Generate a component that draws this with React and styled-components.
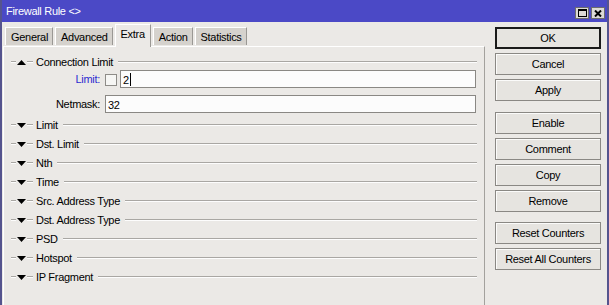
import React from "react";
import styled, { createGlobalStyle } from "styled-components";

const Global = createGlobalStyle`
  html, body { margin: 0; padding: 0; overflow: hidden; background: #ebe9e6; }
  * { box-sizing: border-box; }
  body { font-family: "Liberation Sans", Arial, sans-serif; font-size: 11px; letter-spacing: -0.3px; color: #000; }
`;

const Window = styled.div`
  width: 609px;
  height: 305px;
  display: flex;
  flex-direction: column;
  border-left: 2px solid #55548e;
  border-right: 2px solid #55548e;
  background: #ebe9e6;
  overflow: hidden;
`;

const TitleBar = styled.div`
  height: 22px;
  flex: none;
  background: #4b49c6;
  display: flex;
  align-items: flex-start;
  padding: 4px 2px 0 4px;
`;

const Title = styled.div`
  color: #fff;
  font-size: 11px;
  line-height: 14px;
  flex: 1;
`;

const TitleButtons = styled.div`
  display: flex;
  gap: 2px;
  margin-top: 3px;
`;

const TitleButton = styled.div`
  width: 14px;
  height: 12px;
  background: #dcdad6;
  border: 1px solid #6d6c70;
  display: flex;
  align-items: center;
  justify-content: center;
`;

const Body = styled.div`
  flex: 1;
  display: flex;
  min-height: 0;
`;

const LeftColumn = styled.div`
  width: 484px;
  display: flex;
  flex-direction: column;
`;

const TabStrip = styled.div`
  height: 24px;
  flex: none;
  display: flex;
  align-items: flex-end;
  padding-left: 3px;
  position: relative;
  z-index: 1;
`;

const Tab = styled.div`
  height: ${(p) => (p.$active ? "23px" : "18px")};
  margin-bottom: ${(p) => (p.$active ? "-1px" : "1px")};
  padding: ${(p) => (p.$active ? "2px 5px 0 5px" : "2px 4px 0 5px")};
  margin-right: 2px;
  background: ${(p) => (p.$active ? "#ebe9e6" : "#d5d2cd")};
  border-top: 1px solid #fff;
  border-left: 1px solid #fff;
  border-right: 1px solid #9a9894;
  line-height: 14px;
  white-space: nowrap;
`;

const Pane = styled.div`
  flex: 1;
  margin: 0 1px 0 1px;
  border-top: 1px solid #fff;
  border-left: 1px solid #fff;
  border-right: 1px solid #a3a19d;
  padding: 8px 7px 0 7px;
  display: flex;
  flex-direction: column;
`;

const GroupHeader = styled.div`
  height: 14px;
  margin-top: ${(p) => (p.$first ? "0" : "5px")};
  display: flex;
  align-items: center;
`;

const Seg = styled.div`
  width: ${(p) => p.$w}px;
  flex: ${(p) => (p.$grow ? "1" : "none")};
  height: 2px;
  border-top: 1px solid #a9a7a3;
  border-bottom: 1px solid #fdfdfd;
`;

const Tri = styled.svg`
  flex: none;
  margin: 0 1px;
`;

const GroupTitle = styled.span`
  line-height: 14px;
  margin: 0 5px 0 3px;
  white-space: nowrap;
`;

const FormRow = styled.div`
  height: 18px;
  margin-top: ${(p) => p.$mt}px;
  display: flex;
  align-items: center;
  padding-right: 1px;
`;

const Label = styled.div`
  width: 89px;
  margin-right: 5px;
  text-align: right;
  color: ${(p) => (p.$blue ? "#2b2bd0" : "#000")};
  line-height: 14px;
`;

const Check = styled.div`
  width: 12px;
  height: 12px;
  margin: 1px 3px 0 0;
  background: #f6f6f4;
  border: 1px solid #8e8c88;
`;

const Input = styled.div`
  flex: 1;
  height: 18px;
  background: #fcfcfc;
  border: 1px solid #8a8884;
  padding: 1px 0 0 2px;
  line-height: 14px;
  display: flex;
  align-items: center;
`;

const Caret = styled.span`
  display: inline-block;
  width: 1px;
  height: 13px;
  background: #000;
  margin-left: 1px;
`;

const RightColumn = styled.div`
  width: 121px;
  padding: 5px 6px 0 9px;
  display: flex;
  flex-direction: column;
`;

const Button = styled.div`
  height: 22px;
  margin-top: ${(p) => p.$mt}px;
  border: ${(p) => (p.$default ? "2px solid #1a1a1a" : "1px solid #8a8884")};
  background: #e6e4e0;
  box-shadow: ${(p) => (p.$default ? "none" : "inset 1px 1px 0 #fbfbfa")};
  display: flex;
  align-items: center;
  justify-content: center;
  white-space: nowrap;
  line-height: 14px;
`;

const Triangle = ({ up }) => (
  <Tri width="9" height="5" viewBox="0 0 9 5">
    {up ? <polygon points="0,5 9,5 4.5,0" fill="#000" /> : <polygon points="0,0 9,0 4.5,5" fill="#000" />}
  </Tri>
);

const Group = ({ title, up, first }) => (
  <GroupHeader $first={first}>
    <Seg $w={5} />
    <Triangle up={up} />
    <Seg $w={6} />
    <GroupTitle>{title}</GroupTitle>
    <Seg $grow />
  </GroupHeader>
);

const groups = ["Limit", "Dst. Limit", "Nth", "Time", "Src. Address Type", "Dst. Address Type", "PSD", "Hotspot", "IP Fragment"];
const tabs = ["General", "Advanced", "Extra", "Action", "Statistics"];
const buttons = [
  ["OK", 0, true],
  ["Cancel", 4],
  ["Apply", 4],
  ["Enable", 11],
  ["Comment", 4],
  ["Copy", 4],
  ["Remove", 4],
  ["Reset Counters", 10],
  ["Reset All Counters", 4],
];

export default function App() {
  return (
    <>
      <Global />
      <Window>
        <TitleBar>
          <Title>Firewall Rule &lt;&gt;</Title>
          <TitleButtons>
            <TitleButton>
              <svg width="9" height="8" viewBox="0 0 9 8">
                <rect x="0.5" y="0.5" width="8" height="7" fill="none" stroke="#000" />
                <rect x="0" y="0" width="9" height="2" fill="#000" />
              </svg>
            </TitleButton>
            <TitleButton>
              <svg width="8" height="7" viewBox="0 0 8 7">
                <path d="M1 0.5 L7 6.5 M7 0.5 L1 6.5" stroke="#000" strokeWidth="2" />
              </svg>
            </TitleButton>
          </TitleButtons>
        </TitleBar>
        <Body>
          <LeftColumn>
            <TabStrip>
              {tabs.map((t) => (
                <Tab key={t} $active={t === "Extra"}>{t}</Tab>
              ))}
            </TabStrip>
            <Pane>
              <Group title="Connection Limit" up first />
              <FormRow $mt={1}>
                <Label $blue>Limit:</Label>
                <Check />
                <Input>2<Caret /></Input>
              </FormRow>
              <FormRow $mt={7}>
                <Label>Netmask:</Label>
                <Input>32</Input>
              </FormRow>
              {groups.map((g) => (
                <Group key={g} title={g} />
              ))}
            </Pane>
          </LeftColumn>
          <RightColumn>
            {buttons.map(([b, mt, def]) => (
              <Button key={b} $mt={mt} $default={def}>{b}</Button>
            ))}
          </RightColumn>
        </Body>
      </Window>
    </>
  );
}
